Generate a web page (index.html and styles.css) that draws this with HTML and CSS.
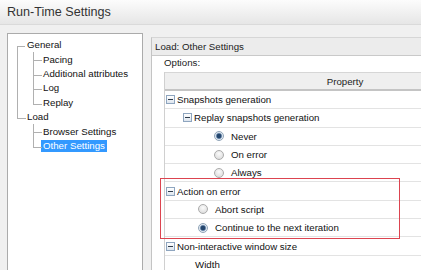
FILE: index.html
```html
<!DOCTYPE html>
<html>
<head>
<meta charset="utf-8">
<link rel="stylesheet" href="styles.css">
</head>
<body>
<div class="titlebar">Run-Time Settings</div>
<div class="content">
  <div class="nav">
    <ul class="tree">
      <li>
        <div class="node"><span class="text">General</span></div>
        <ul>
          <li><div class="node"><span class="text">Pacing</span></div></li>
          <li><div class="node"><span class="text">Additional attributes</span></div></li>
          <li><div class="node"><span class="text">Log</span></div></li>
          <li><div class="node"><span class="text">Replay</span></div></li>
        </ul>
      </li>
      <li>
        <div class="node"><span class="text">Load</span></div>
        <ul>
          <li><div class="node"><span class="text">Browser Settings</span></div></li>
          <li><div class="node selected"><span class="text">Other Settings</span></div></li>
        </ul>
      </li>
    </ul>
  </div>
  <div class="main">
    <div class="main-header">Load: Other Settings</div>
    <div class="options-label">Options:</div>
    <div class="grid">
      <div class="grid-head"><div class="col-prop">Property</div></div>
      <div class="row lvl0"><span class="exp"></span>Snapshots generation</div>
      <div class="row lvl1"><span class="exp"></span>Replay snapshots generation</div>
      <div class="row lvl2r"><span class="radio on"></span>Never</div>
      <div class="row lvl2r"><span class="radio"></span>On error</div>
      <div class="row lvl2r"><span class="radio"></span>Always</div>
      <div class="callout">
        <div class="row lvl0"><span class="exp"></span>Action on error</div>
        <div class="row lvl1r"><span class="radio"></span>Abort script</div>
        <div class="row lvl1r"><span class="radio on"></span>Continue to the next iteration</div>
      </div>
      <div class="row lvl0"><span class="exp"></span>Non-interactive window size</div>
      <div class="row lvl1t">Width</div>
    </div>
  </div>
</div>
</body>
</html>
```

FILE: styles.css
```css
* { box-sizing: border-box; }
html, body { margin: 0; padding: 0; }
body {
  width: 421px;
  height: 270px;
  overflow: hidden;
  background: #f0f0f0;
  font-family: "Liberation Sans", Arial, sans-serif;
  font-size: 9.7px;
  color: #111;
}
.titlebar {
  height: 25px;
  padding-left: 7px;
  display: flex;
  align-items: center;
  font-size: 12.6px;
  color: #333;
  background: linear-gradient(#fcfcfc, #e6e6e6);
  border-bottom: 1px solid #dadada;
}
.content {
  display: flex;
  gap: 8px;
  padding: 8px 0 0 7px;
}
.nav {
  flex: none;
  width: 136px;
  height: 237px;
  background: #fff;
  border: 1px solid #ababab;
  border-bottom: none;
  padding-top: 4px;
}
.tree, .tree ul { list-style: none; margin: 0; padding: 0; }
.tree li { position: relative; }
.tree > li { padding-left: 17px; }
.tree ul > li { padding-left: 16px; }
.tree li::before {
  content: "";
  position: absolute;
  top: 0;
  height: 8px;
  border-left: 1px solid #b0b0b0;
  border-bottom: 1px solid #b0b0b0;
}
.tree > li::before { left: 9px; width: 8px; }
.tree ul > li::before { left: 8px; width: 8px; }
.tree > li:first-child::before { border-left: none; }
.tree li::after {
  content: "";
  position: absolute;
  top: 8px;
  bottom: 0;
  border-left: 1px solid #b0b0b0;
}
.tree > li::after { left: 9px; }
.tree ul > li::after { left: 8px; }
.tree li:last-child::after { display: none; }
.node {
  height: 14.4px;
  display: flex;
  align-items: center;
  white-space: nowrap;
}
.text { padding: 0 2px; line-height: 12px; }
.selected .text { background: #3399ff; color: #fff; }

.main {
  flex: none;
  width: 270px;
  height: 233px;
  overflow: hidden;
  margin-top: 4px;
  background: #fff;
  border-left: 1px solid #c4c4c4;
  border-top: 1px solid #d6d6d6;
}
.main-header {
  height: 18px;
  padding-left: 3px;
  display: flex;
  align-items: center;
  background: #ececec;
  border-bottom: 1px solid #c9c9c9;
  color: #222;
}
.options-label {
  margin: 1px 0 0 12px;
  line-height: 12px;
  color: #222;
}
.grid {
  margin: 3px 0 0 12px;
  width: 380px;
  border-left: 1px solid #d0d0d0;
}
.grid-head {
  height: 19px;
  display: flex;
  align-items: center;
  background: #efefef;
  border-top: 1px solid #d6d6d6;
  border-bottom: 2px solid #c4c4c4;
}
.col-prop { width: 360px; text-align: center; color: #222; }
.row {
  height: 18.3px;
  display: flex;
  align-items: center;
  white-space: nowrap;
  border-bottom: 1px solid #e3e3e3;
}
.lvl0 { padding-left: 1px; }
.lvl1 { padding-left: 18px; }
.lvl1r { padding-left: 33px; }
.lvl2r { padding-left: 49px; }
.lvl1t { padding-left: 30px; }
.exp {
  flex: none;
  width: 9px;
  height: 9px;
  margin-right: 2px;
  border: 1px solid #8ea5bf;
  background: linear-gradient(#ffffff, #dde5ee);
  display: flex;
  align-items: center;
  justify-content: center;
}
.exp::before {
  content: "";
  width: 5px;
  height: 1px;
  background: #2d3b4b;
}
.radio {
  flex: none;
  width: 10px;
  height: 10px;
  margin-right: 7px;
  border-radius: 50%;
  border: 1px solid #ababab;
  background: radial-gradient(circle at 50% 35%, #fbfbfb, #d6d6d6);
}
.radio.on {
  border-color: #90a4b8;
  background: radial-gradient(circle, #24466d 0 2px, #6f8cae 2.6px, #e6edf4 3.6px, #d5dbe2 100%);
}
.callout { position: relative; }
.callout::after {
  content: "";
  position: absolute;
  left: -5px;
  top: -4.5px;
  width: 238px;
  height: 59px;
  border: 1px solid #dc4450;
  pointer-events: none;
}
```
